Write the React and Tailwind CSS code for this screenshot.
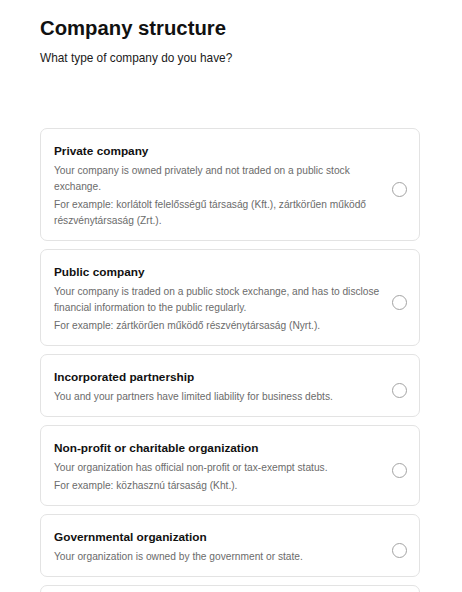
const options = [
  {
    title: "Private company",
    desc: "Your company is owned privately and not traded on a public stock exchange.",
    example: "For example: korlátolt felelősségű társaság (Kft.), zártkörűen működő részvénytársaság (Zrt.).",
  },
  {
    title: "Public company",
    desc: "Your company is traded on a public stock exchange, and has to disclose financial information to the public regularly.",
    example: "For example: zártkörűen működő részvénytársaság (Nyrt.).",
  },
  {
    title: "Incorporated partnership",
    desc: "You and your partners have limited liability for business debts.",
  },
  {
    title: "Non-profit or charitable organization",
    desc: "Your organization has official non-profit or tax-exempt status.",
    example: "For example: közhasznú társaság (Kht.).",
  },
  {
    title: "Governmental organization",
    desc: "Your organization is owned by the government or state.",
  },
  {
    title: "Other",
    desc: "Your organization does not fit any of the above types.",
  },
];

export default function App() {
  return (
    <div
      className="min-h-screen bg-white pl-10 pr-[42px] pt-[15px] text-[#111111]"
      style={{ fontFamily: '"Liberation Sans", Arial, sans-serif' }}
    >
      <h1 className="text-[20.3px] font-bold leading-[26px]">Company structure</h1>
      <p className="mt-[9px] text-[11.85px] leading-[16px] text-[#1a1a1a]">
        What type of company do you have?
      </p>
      <div className="mt-[62px] flex flex-col gap-2">
        {options.map((o) => (
          <label
            key={o.title}
            className="flex items-center rounded-[7px] border border-[#e3e3e3] bg-white pl-[13px] pr-[12px] pt-[14px] pb-[11px]"
          >
            <div className="flex-1 pr-3">
              <div className="text-[11.8px] font-bold leading-[17px] text-[#111111]">{o.title}</div>
              <div className="mt-[3px] text-[10.2px] leading-[16px] text-[#6b6b6b]">{o.desc}</div>
              {o.example && (
                <div className="mt-[2px] text-[10.2px] leading-[16px] text-[#6b6b6b]">{o.example}</div>
              )}
            </div>
            <span className="mt-[6px] h-[15px] w-[15px] shrink-0 rounded-full border border-[#a3a3a3] bg-white" />
          </label>
        ))}
      </div>
    </div>
  );
}
